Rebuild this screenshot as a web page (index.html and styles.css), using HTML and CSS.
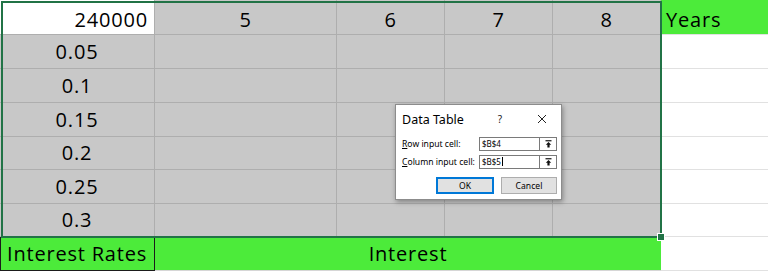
FILE: index.html
```html
<!DOCTYPE html>
<html>
<head>
<meta charset="utf-8">
<link rel="stylesheet" href="styles.css">
</head>
<body>
<div class="sheet">
  <div class="grid">
    <div class="cell active r1 right">240000</div>
    <div class="cell sel r1">5</div>
    <div class="cell sel r1">6</div>
    <div class="cell sel r1">7</div>
    <div class="cell sel r1">8</div>
    <div class="cell green r1 left">Years</div>

    <div class="cell sel">0.05</div>
    <div class="cell sel"></div><div class="cell sel"></div><div class="cell sel"></div><div class="cell sel"></div>
    <div class="cell plain"></div>

    <div class="cell sel">0.1</div>
    <div class="cell sel"></div><div class="cell sel"></div><div class="cell sel"></div><div class="cell sel"></div>
    <div class="cell plain"></div>

    <div class="cell sel">0.15</div>
    <div class="cell sel"></div><div class="cell sel"></div><div class="cell sel"></div><div class="cell sel"></div>
    <div class="cell plain"></div>

    <div class="cell sel">0.2</div>
    <div class="cell sel"></div><div class="cell sel"></div><div class="cell sel"></div><div class="cell sel"></div>
    <div class="cell plain"></div>

    <div class="cell sel">0.25</div>
    <div class="cell sel"></div><div class="cell sel"></div><div class="cell sel"></div><div class="cell sel"></div>
    <div class="cell plain"></div>

    <div class="cell sel">0.3</div>
    <div class="cell sel"></div><div class="cell sel"></div><div class="cell sel"></div><div class="cell sel"></div>
    <div class="cell plain"></div>

    <div class="cell green boxed left">Interest Rates</div>
    <div class="cell green merged">Interest</div>
    <div class="cell plain"></div>
  </div>

  <div class="selection"></div>
  <div class="handle"></div>

  <div class="dialog">
    <div class="dlg-title">
      <span class="dlg-name">Data Table</span>
      <span class="dlg-help">?</span>
      <span class="dlg-close">
        <svg width="10" height="10" viewBox="0 0 10 10"><path d="M1 1 L9 9 M9 1 L1 9" stroke="#222" stroke-width="1" fill="none"/></svg>
      </span>
    </div>
    <div class="dlg-body">
      <div class="dlg-row">
        <span class="dlg-label"><u>R</u>ow input cell:</span>
        <div class="dlg-input"><span class="dlg-text">$B$4</span><span class="dlg-pick"><svg width="7" height="8" viewBox="0 0 7 8"><path d="M0.5 0.75 H6.5" stroke="#111" stroke-width="1.2"/><path d="M3.5 2 L0.8 4.8 H2.4 V7.5 H4.6 V4.8 H6.2 Z" fill="#111"/></svg></span></div>
      </div>
      <div class="dlg-row">
        <span class="dlg-label"><u>C</u>olumn input cell:</span>
        <div class="dlg-input"><span class="dlg-text">$B$5<span class="caret"></span></span><span class="dlg-pick"><svg width="7" height="8" viewBox="0 0 7 8"><path d="M0.5 0.75 H6.5" stroke="#111" stroke-width="1.2"/><path d="M3.5 2 L0.8 4.8 H2.4 V7.5 H4.6 V4.8 H6.2 Z" fill="#111"/></svg></span></div>
      </div>
      <div class="dlg-buttons">
        <div class="btn btn-ok">OK</div>
        <div class="btn">Cancel</div>
      </div>
    </div>
  </div>
</div>
</body>
</html>
```
FILE: styles.css
```css
html, body {
  margin: 0;
  padding: 0;
  background: #ffffff;
  overflow: hidden;
}
.sheet {
  position: relative;
  width: 768px;
  height: 273px;
  font-family: "Open Sans", "Noto Sans", sans-serif;
}
.grid {
  display: grid;
  grid-template-columns: 155px 182px 108px 108px 108px 107px;
  grid-template-rows: 35px 34px 34px 34px 33px 34px 33px 34px;
}
.cell {
  box-sizing: border-box;
  display: flex;
  align-items: center;
  justify-content: center;
  font-size: 20px;
  letter-spacing: 0.8px;
  color: #000;
  border-right: 1px solid #aeaeae;
  border-bottom: 1px solid #aeaeae;
  white-space: nowrap;
  line-height: 1;
}
.r1 {
  padding-top: 6px;
}
.right {
  justify-content: flex-end;
  padding-right: 6px;
}
.left {
  justify-content: flex-start;
  padding-left: 5px;
}
.active {
  background: #ffffff;
}
.sel {
  background: #c8c8c8;
}
.plain {
  background: #ffffff;
  border-right: none;
  border-bottom: 1px solid #e1e1e1;
}
.green {
  background: #4ceb3a;
}
.green.r1 {
  border-right: none;
  border-bottom: 1px solid #e1e1e1;
}
.boxed {
  border: 1px solid #1b1b1b;
  border-top: none;
  padding-left: 6px;
}
.merged {
  grid-column: span 4;
  border-right: none;
  border-bottom: 1px solid #d6d6d6;
}
.selection {
  position: absolute;
  left: 1px;
  top: 1px;
  width: 657px;
  height: 233px;
  border: 2px solid #217346;
  pointer-events: none;
}
.handle {
  position: absolute;
  left: 658px;
  top: 234px;
  width: 6px;
  height: 6px;
  background: #217346;
  border: 1px solid #ffffff;
  box-sizing: content-box;
  margin: -1px 0 0 -1px;
}
.dialog {
  position: absolute;
  left: 395px;
  top: 104px;
  width: 167px;
  height: 96px;
  box-sizing: border-box;
  background: #ffffff;
  border: 1px solid #8c8c8c;
  box-shadow: 1px 2px 5px rgba(0, 0, 0, 0.35);
  font-family: "Noto Sans", "Open Sans", sans-serif;
  color: #000;
  display: flex;
  flex-direction: column;
}
.dlg-title {
  display: flex;
  align-items: center;
  height: 27px;
  padding: 0 14px 0 6px;
}
.dlg-name {
  font-size: 12.5px;
  flex: 1;
  padding-top: 1px;
}
.dlg-help {
  font-size: 10px;
  margin-right: 35px;
  color: #222;
}
.dlg-close {
  display: flex;
}
.dlg-body {
  display: flex;
  flex-direction: column;
  padding: 5px 4px 0 6px;
  gap: 5px;
}
.dlg-row {
  display: flex;
  align-items: center;
  justify-content: space-between;
  height: 13px;
}
.dlg-label {
  font-size: 8.6px;
}
.dlg-input {
  box-sizing: border-box;
  width: 78px;
  height: 14px;
  border: 1px solid #7a7a7a;
  display: flex;
  align-items: center;
  background: #fff;
}
.dlg-text {
  flex: 1;
  font-size: 8px;
  padding-left: 2px;
  display: flex;
  align-items: center;
}
.caret {
  display: inline-block;
  width: 1px;
  height: 9px;
  background: #000;
  margin-left: 1px;
}
.dlg-pick {
  width: 16px;
  height: 100%;
  border-left: 1px solid #7a7a7a;
  display: flex;
  align-items: center;
  justify-content: center;
}
.dlg-buttons {
  display: flex;
  justify-content: flex-end;
  gap: 7px;
  margin-top: 4px;
}
.btn {
  box-sizing: border-box;
  width: 56px;
  height: 17px;
  background: #e1e1e1;
  border: 1px solid #adadad;
  font-size: 8.6px;
  display: flex;
  align-items: center;
  justify-content: center;
}
.btn-ok {
  width: 58px;
  border: 2px solid #0078d7;
}
```
